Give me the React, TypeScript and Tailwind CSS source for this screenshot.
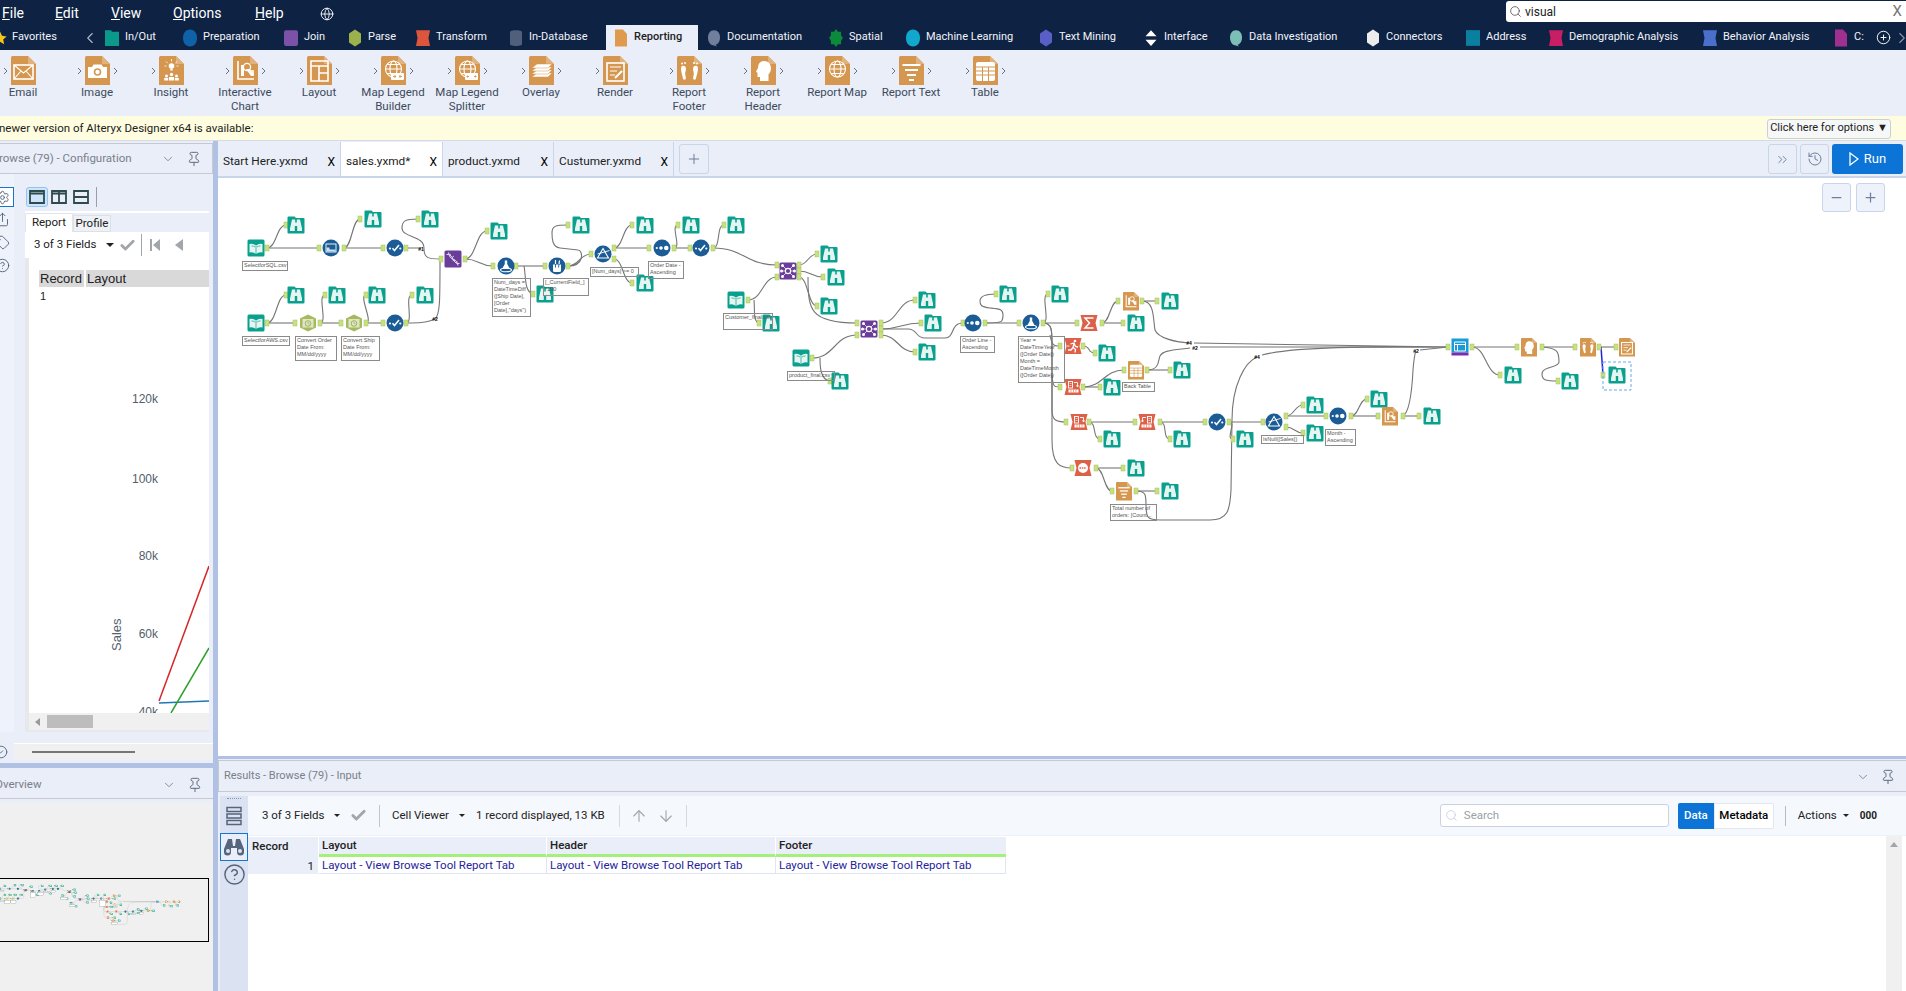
import type { ReactNode } from 'react';
import {
  ArrowDown,
  ArrowUp,
  Check,
  ChevronDown,
  ChevronLeft,
  ChevronRight,
  ChevronsRight,
  CircleCheck,
  CircleHelp,
  CirclePlus,
  Globe,
  History,
  Minus,
  Pin,
  Plus,
  Search,
  Settings,
  Share,
  Tag,
} from 'lucide-react';

const ORANGE = '#d5974f';

// white drawing that sits on the orange report tools, 25x29 units
const DocGlyph = ({ name }: { name: string }) => {
  const line = { fill: 'none', stroke: '#fff', strokeWidth: 1.6 };
  const globe = (
    <g {...line} strokeWidth={1.1}>
      <circle cx="12.5" cy="13" r="8" />
      <ellipse cx="12.5" cy="13" rx="3.5" ry="8" />
      <path d="M4.5 13h16M6 8.5h13M6 17.5h13" />
    </g>
  );
  switch (name) {
    case 'email':
      return (
        <g {...line}>
          <rect x="3" y="9" width="19" height="14" />
          <path d="M3 9l9.5 8 9.5-8M3 23l7-8M22 23l-7-8" strokeWidth={1.1} />
        </g>
      );
    case 'image':
      return (
        <g>
          <path d="M3 11h4l1.5-2.5h8L18 11h4v11H3z" fill="#fff" />
          <circle cx="12.5" cy="16" r="3.8" fill={ORANGE} />
          <circle cx="12.5" cy="16" r="2.2" fill="#fff" />
        </g>
      );
    case 'insight':
      return (
        <g fill="#fff">
          <circle cx="12.5" cy="10" r="2.8" />
          <rect x="11.3" y="12.5" width="2.4" height="2" />
          <path d="M12.5 3v2.5M7 5.5l1.6 1.6M18 5.5l-1.6 1.6M5.5 10h2M17.5 10h2" stroke="#fff" strokeWidth="0.8" />
          <circle cx="12.5" cy="18.5" r="1.7" />
          <circle cx="7.5" cy="20" r="1.5" />
          <circle cx="17.5" cy="20" r="1.5" />
          <rect x="10" y="21" width="5" height="3.5" />
          <rect x="5.2" y="22" width="4" height="2.5" />
          <rect x="15.8" y="22" width="4" height="2.5" />
        </g>
      );
    case 'chart':
      return (
        <g>
          <path d="M5 5v18h16" {...line} />
          <rect x="8" y="9" width="3" height="11" fill="#fff" />
          <circle cx="14" cy="11" r="3.6" {...line} strokeWidth={1.3} />
          <path d="M13 13l5 7 3-1-4-6z" fill="#fff" />
          <rect x="18" y="14" width="3" height="6" fill="#fff" opacity="0.8" />
        </g>
      );
    case 'layout':
      return <path d="M4 5h17v20H4zM4 10h17M12 10v15M12 17h9" {...line} />;
    case 'builder':
    case 'splitter':
      return (
        <g>
          {globe}
          <rect x="10" y="17" width="13" height="7" rx="1" fill="#fff" />
          <path d={name === 'builder' ? 'M12 20.5h3M21 20.5h-3M14 19v3M19 19v3' : 'M14 20.5h-2.5M19 20.5h2.5M12.5 19.5v2M20.5 19.5v2'} stroke={ORANGE} strokeWidth="0.9" />
        </g>
      );
    case 'overlay':
      return (
        <g fill="#fff" stroke={ORANGE} strokeWidth="0.5">
          <path d="M3 21l5-4h15l-4 4z" />
          <path d="M3 18l5-4h15l-4 4z" />
          <path d="M3 15l5-4h15l-4 4z" />
          <path d="M3 12l5-4h15l-4 4z" />
        </g>
      );
    case 'render':
      return (
        <g {...line}>
          <rect x="4" y="7" width="17" height="18" />
          <path d="M7 11h11M7 15h7M7 19h5" strokeWidth={1.2} />
          <path d="M12 22l7-7" strokeWidth={2} />
        </g>
      );
    case 'footer':
      return (
        <g fill="#fff">
          <path d="M5 10c2-1 4 0 4 3 0 2-1 3-.8 5 .2 2 .8 2.500.6 4.500-.2 1.600-2.300 1.600-2.800 0C5.500 20 4 15 4 13c0-1.500.2-2.500 1-3z" />
          <path d="M20 10c-2-1-4 0-4 3 0 2 1 3 .8 5-.2 2-.8 2.500-.6 4.500.2 1.600 2.300 1.600 2.800 0C19.500 20 21 15 21 13c0-1.500-.2-2.500-1-3z" />
          <circle cx="5" cy="7.500" r="1" />
          <circle cx="8" cy="7" r="1" />
          <circle cx="20" cy="7.500" r="1" />
          <circle cx="17" cy="7" r="1" />
        </g>
      );
    case 'header':
      return <path d="M13 5c4.500 0 7 3 7 7.500 0 3-1.500 4.500-2.500 6V25H9v-4H6.500v-4L5 15.500l2-3.500c0-4 2-7 6-7z" fill="#fff" />;
    case 'map':
      return globe;
    case 'text':
      return (
        <g fill="#fff">
          <rect x="3.500" y="8" width="18" height="2" />
          <rect x="6" y="13" width="13" height="2" />
          <rect x="8" y="18" width="9" height="2" />
          <rect x="10" y="23" width="5" height="2" />
        </g>
      );
    case 'table':
      return (
        <g>
          <rect x="3" y="6" width="19" height="19" rx="2" fill="#fff" />
          <path d="M3 11h19M3 15h19M3 19h19M9.500 11v14M15.500 11v14" stroke={ORANGE} strokeWidth="1" />
        </g>
      );
    default:
      return null;
  }
};

const DocBody = ({ name }: { name: string }) => (
  <>
    <path d="M1.500 0H17l8 8v21H0V1.500Q0 0 1.500 0z" fill={ORANGE} />
    <path d="M17 0l8 8h-8z" fill="#e3b27c" />
    <DocGlyph name={name} />
  </>
);

// tools on the canvas, all drawn in 17x17 units round their centre
const TEAL = '#0aa08d';
const BLUE = '#1b5c97';
const RED = '#dd6148';
const PURPLE = '#6a3d9a';

const redShape = 'M0 0.500H17L15 8.500L17 16.500H0L2 8.500Z';

const Tool = ({ kind, x, y }: { kind: string; x: number; y: number }) => {
  let body: ReactNode = null;
  const w = { fill: 'none', stroke: '#fff', strokeWidth: 1.1 };
  switch (kind) {
    case 'browse':
      body = (
        <>
          <path d="M1 0H7L8.500 1.500H16Q17 1.500 17 2.500V16Q17 17 16 17H1Q0 17 0 16V1Q0 0 1 0Z" fill={TEAL} />
          <path d="M4.500 3H7.700V6H9.300V3H12.500L14.500 12V14.500H9.700V9.500H7.300V14.500H2.500V12Z" fill="#e4f5f2" />
        </>
      );
      break;
    case 'input':
      body = (
        <>
          <rect width="17" height="17" rx="1.500" fill={TEAL} />
          <path d="M2 4.500Q5.500 3.500 8.500 6Q11.500 3.500 15 4.500V13Q11.500 12 8.500 14.500Q5.500 12 2 13Z" fill="#e4f5f2" />
          <path d="M8.500 6V14.500M4 6.500Q6 6.300 7.500 7.500M13 6.500Q11 6.300 9.500 7.500" stroke={TEAL} strokeWidth="0.7" fill="none" />
        </>
      );
      break;
    case 'select':
      body = (
        <>
          <circle cx="8.500" cy="8.500" r="8.500" fill={BLUE} />
          <rect x="3.500" y="4.500" width="10" height="8" fill="none" stroke="#fff" strokeWidth="0.9" />
          <path d="M4 12V8h3v2h6v2z" fill="#cfe0f0" />
        </>
      );
      break;
    case 'check':
      body = (
        <>
          <circle cx="8.500" cy="8.500" r="8.500" fill={BLUE} />
          <circle cx="3.500" cy="9" r="1.100" fill="#fff" />
          <circle cx="13.800" cy="9" r="1.100" fill="#fff" />
          <path d="M6 8.800L8 11L12.500 5.500" fill="none" stroke="#fff" strokeWidth="1.500" />
        </>
      );
      break;
    case 'sort':
      body = (
        <>
          <circle cx="8.500" cy="8.500" r="8.500" fill={BLUE} />
          <circle cx="3.300" cy="8.500" r="1.100" fill="#fff" />
          <circle cx="7.500" cy="8.500" r="1.800" fill="#fff" />
          <circle cx="12.800" cy="8.500" r="2.300" fill="#fff" />
        </>
      );
      break;
    case 'formula':
      body = (
        <>
          <circle cx="8.500" cy="8.500" r="8.500" fill={BLUE} />
          <path d="M7.300 3H9.700V6.500L12.500 11.500H4.500L7.300 6.500Z" fill="#fff" />
          <ellipse cx="8.500" cy="12.500" rx="5.500" ry="1.800" {...w} />
        </>
      );
      break;
    case 'multi':
      body = (
        <>
          <circle cx="8.500" cy="8.500" r="8.500" fill={BLUE} />
          <path d="M4.500 7H12.500V13Q12.500 14.500 11 14.500H6Q4.500 14.500 4.500 13Z" fill="#fff" />
          <path d="M7 10V2.500M10 10L11 3" stroke={BLUE} strokeWidth="0.9" />
          <path d="M7 6.500V2.500M10.500 6.500L11 3" stroke="#fff" strokeWidth="1.200" />
        </>
      );
      break;
    case 'filter':
      body = (
        <>
          <circle cx="8.500" cy="8.500" r="8.500" fill={BLUE} />
          <path d="M8.500 3L14 12.500H3Z" {...w} />
          <path d="M3 8.500L15 5" stroke="#fff" strokeWidth="0.9" />
        </>
      );
      break;
    case 'dna':
      body = (
        <>
          <rect width="17" height="17" rx="1.500" fill={PURPLE} />
          <path d="M2 4Q6 3 8.500 8.500T15 13M4 2Q5 8 9 9T13.500 15" fill="none" stroke="#ece6f4" strokeWidth="1" />
          <path d="M5 4.500L6.500 3.500M7.500 7L9.500 5.500M8 10.500L10.500 9M11 12.500L12.500 11" stroke="#ece6f4" strokeWidth="0.7" />
        </>
      );
      break;
    case 'join':
      body = (
        <>
          <rect width="17" height="17" rx="1.500" fill={PURPLE} />
          <circle cx="8.500" cy="8.500" r="2.600" {...w} />
          <path d="M3 3L6.500 6.500M14 3L10.500 6.500M3 14L6.500 10.500M14 14L10.500 10.500M1.500 8.500H5.900M15.500 8.500H11.100" stroke="#fff" strokeWidth="0.7" />
          {[
            [3, 3],
            [14, 3],
            [3, 14],
            [14, 14],
            [2, 8.5],
            [15, 8.5],
          ].map(([cx, cy]) => (
            <circle key={`${cx}-${cy}`} cx={cx} cy={cy} r="1.500" fill="#fff" />
          ))}
        </>
      );
      break;
    case 'date':
      body = (
        <>
          <path d="M8.500 0L16.500 4V13L8.500 17L0.500 13V4Z" fill="#a5ba5e" />
          <rect x="3" y="4.500" width="11" height="8.500" fill="#dfe7c2" />
          <circle cx="8.500" cy="9" r="2.800" fill="none" stroke="#8ea24c" strokeWidth="0.8" />
          <path d="M8.500 7.500V9L10 9.500" fill="none" stroke="#8ea24c" strokeWidth="0.6" />
        </>
      );
      break;
    case 'sum':
      body = (
        <>
          <path d={redShape} fill={RED} />
          <path d="M13 3.500H4.500L9 8.500L4.500 13.500H13" fill="none" stroke="#fff" strokeWidth="1.500" />
        </>
      );
      break;
    case 'run':
      body = (
        <>
          <path d={redShape} fill={RED} />
          <circle cx="10.500" cy="3.500" r="1.300" fill="#fff" />
          <path d="M6 6.500L9.500 5.500L11 9L13.500 9.500M9.500 6L8.500 10L11 12L10.500 15M8.500 10L6.500 12.500H3.500" fill="none" stroke="#fff" strokeWidth="1.300" />
          <path d="M2.500 8.500H5" stroke="#fff" strokeWidth="0.8" />
        </>
      );
      break;
    case 'cross':
    case 'transpose':
      body = (
        <>
          <path d={redShape} fill={RED} />
          <g transform={kind === 'transpose' ? 'translate(17 0) scale(-1 1)' : undefined}>
            <rect x="4" y="3" width="4" height="6.500" fill="none" stroke="#fff" strokeWidth="0.9" />
            <path d="M5 5H7M5 7H7" stroke="#fff" strokeWidth="0.6" />
            <path d="M9.500 4H13V8M12 7L13 8.500L14 7" fill="none" stroke="#fff" strokeWidth="0.9" />
            <rect x="4" y="11" width="10" height="3" fill="#fff" />
            <path d="M6.500 11V14M9 11V14M11.500 11V14" stroke={RED} strokeWidth="0.6" />
          </g>
        </>
      );
      break;
    case 'count':
      body = (
        <>
          <path d={redShape} fill={RED} />
          <circle cx="8.500" cy="8.500" r="5" fill="#fff" />
          <path d="M5 8.500H12" stroke={RED} strokeWidth="1.600" strokeDasharray="1.500 0.800" />
        </>
      );
      break;
    case 'layout':
      body = (
        <>
          <rect width="17" height="14" fill="#1a9ad6" />
          <rect y="14" width="17" height="3" fill="#7b2fb0" />
          <path d="M3 3.500H14V12.500H3ZM3 6H14M6 6V12.500" fill="none" stroke="#fff" strokeWidth="1" />
        </>
      );
      break;
    default:
      return (
        <g transform={`translate(${x - 8} ${y - 9}) scale(0.64)`}>
          <DocBody name={kind} />
        </g>
      );
  }
  return <g transform={`translate(${x - 8.5} ${y - 8.5})`}>{body}</g>;
};

const tools: [string, number, number][] = [
  ['input', 256, 248], ['browse', 296, 225], ['select', 331, 248], ['browse', 373, 219], ['check', 395, 248],
  ['browse', 430, 219], ['dna', 453, 259], ['browse', 499, 231], ['formula', 506, 266], ['browse', 545, 294],
  ['multi', 557, 266], ['browse', 581, 225], ['filter', 603, 254], ['browse', 645, 225], ['browse', 645, 283],
  ['sort', 662, 248], ['browse', 691, 225], ['check', 701, 248], ['browse', 736, 225],
  ['input', 256, 323], ['browse', 296, 295], ['date', 308, 323], ['browse', 337, 295], ['date', 354, 323],
  ['browse', 377, 295], ['check', 395, 323], ['browse', 425, 295],
  ['join', 788, 271], ['browse', 829, 254], ['browse', 836, 277], ['browse', 829, 306], ['input', 736, 300],
  ['browse', 771, 323], ['join', 869, 329], ['browse', 927, 300], ['browse', 933, 323], ['browse', 927, 352],
  ['input', 801, 358], ['browse', 840, 381], ['sort', 973, 323], ['browse', 1008, 294], ['formula', 1031, 323],
  ['browse', 1060, 294], ['sum', 1089, 323], ['chart', 1131, 301], ['browse', 1170, 301], ['browse', 1136, 323],
  ['run', 1073, 346], ['browse', 1107, 353], ['cross', 1073, 387], ['table', 1136, 370], ['browse', 1112, 387],
  ['browse', 1182, 370], ['cross', 1079, 422], ['browse', 1112, 439], ['transpose', 1147, 422], ['browse', 1182, 439],
  ['check', 1217, 422], ['browse', 1245, 439], ['filter', 1274, 422], ['browse', 1315, 405], ['browse', 1315, 433],
  ['sort', 1338, 416], ['browse', 1379, 399], ['chart', 1390, 416], ['browse', 1432, 416], ['count', 1083, 468],
  ['browse', 1136, 468], ['text', 1124, 491], ['browse', 1170, 491], ['layout', 1460, 347], ['browse', 1513, 375],
  ['header', 1529, 347], ['footer', 1588, 347], ['browse', 1570, 381], ['render', 1627, 347], ['browse', 1617, 375],
];

// connections that are a plain S curve between two anchors
const links: [number, number, number, number][] = [
  [267, 248, 286, 225], [267, 248, 319, 248], [344, 248, 360, 219], [344, 248, 383, 248],
  [267, 323, 286, 295], [267, 323, 295, 323], [320, 323, 325, 295], [320, 323, 341, 323],
  [366, 323, 366, 295], [366, 323, 383, 323], [406, 323, 412, 295], [465, 259, 487, 231],
  [465, 259, 493, 266], [516, 266, 545, 266], [568, 266, 591, 254], [614, 248, 632, 225],
  [614, 248, 649, 248], [614, 259, 632, 283], [674, 248, 678, 225], [674, 248, 690, 248],
  [713, 248, 724, 225], [713, 248, 777, 265], [748, 300, 777, 277], [799, 265, 817, 254],
  [799, 271, 823, 277], [799, 277, 817, 306], [812, 358, 857, 335], [881, 323, 915, 300],
  [881, 329, 921, 323], [881, 335, 915, 352], [985, 323, 1019, 323], [1043, 323, 1048, 294],
  [1043, 323, 1077, 323], [1102, 323, 1118, 301], [1102, 323, 1123, 323], [1142, 301, 1157, 301],
  [1083, 346, 1095, 353], [1083, 387, 1124, 370], [1083, 387, 1100, 387], [1147, 370, 1170, 370],
  [1089, 422, 1135, 422], [1089, 422, 1100, 439], [1160, 422, 1205, 422], [1160, 422, 1170, 439],
  [1229, 422, 1263, 422], [1229, 422, 1233, 439], [1286, 416, 1303, 405], [1286, 416, 1326, 416],
  [1286, 427, 1303, 433], [1351, 416, 1367, 399], [1351, 416, 1378, 416], [1403, 416, 1419, 416],
  [1096, 468, 1123, 468], [1096, 468, 1112, 491], [1136, 491, 1157, 491], [1472, 347, 1517, 347],
  [1472, 347, 1500, 375], [1542, 347, 1575, 347], [1599, 347, 1616, 347],
];

// the wires with a hand shaped route
const routes = [
  'M406 248H421M424 249C425 235 402 238 402 228C402 221 405 219 418 219',
  'M424 249C424 258 428 259 441 259',
  'M406 323C415 323 425 324 435 319C440 315 440 300 440 262',
  'M524 266C526 275 524 292 533 294',
  'M568 266C585 266 583 250 578 250L560 248C552 247 552 238 552 233C552 226 555 225 568 225',
  'M754 300C755 310 753 322 759 323',
  'M808 277C808 310 810 323 857 323',
  'M820 358C820 365 820 380 830 381',
  'M881 329H908C918 329 915 338 925 338H945C955 338 950 323 963 323',
  'M985 323C1003 323 1003 322 1003 315C1003 309 1000 309 990 308C980 307 980 304 980 301C980 296 985 294 996 294',
  'M1043 323C1052 323 1052 330 1052 345V410C1052 420 1056 422 1066 422',
  'M1043 323C1052 323 1052 330 1052 345V440C1052 465 1060 468 1072 468',
  'M1050 335C1052 346 1054 346 1060 346',
  'M1052 375C1053 387 1054 387 1060 387',
  'M1142 301C1155 301 1153 320 1155 330C1158 338 1175 342 1189 343',
  'M1147 370C1160 370 1158 360 1160 356C1163 350 1175 350 1190 348',
  'M1194 343L1448 347M1200 347H1448',
  'M1403 416C1410 412 1412 390 1413 370C1414 358 1415 353 1416 351',
  'M1420 350L1448 347',
  'M1136 491C1146 491 1146 495 1146 505C1146 518 1148 520 1160 520H1210C1228 520 1230 510 1231 490L1232 420C1232 385 1245 362 1257 357',
  'M1262 355C1300 345 1400 347 1448 347',
  'M1542 347C1558 348 1559 352 1559 362C1559 368 1542 366 1542 374C1542 380 1545 381 1558 381',
];

const extraPorts: [number, number][] = [
  [406, 248], [418, 219], [441, 259], [533, 294], [568, 225], [759, 323], [857, 323], [830, 381], [963, 323],
  [996, 294], [1066, 422], [1072, 468], [1060, 346], [1060, 387], [1558, 381], [1603, 375], [516, 266],
  [748, 300], [812, 358], [881, 323], [881, 329], [881, 335], [799, 265], [799, 271], [799, 277],
  [777, 265], [777, 277], [857, 335], [1472, 347], [1542, 347], [1599, 347], [1286, 416], [1286, 427],
  [1403, 416], [1142, 301], [1147, 370], [1160, 422], [1229, 422], [1136, 491], [1096, 468], [985, 323],
  [1043, 323], [1089, 422], [1083, 387], [1083, 346], [1102, 323], [713, 248], [690, 248], [674, 248],
  [1448, 347],
];

const wireTags: [number, number, string][] = [
  [421, 249, '#1'], [435, 319, '#2'], [1189, 343, '#4'], [1195, 348, '#2'], [1257, 357, '#4'], [1416, 351, '#2'],
];

const curve = ([x1, y1, x2, y2]: [number, number, number, number]) => {
  const dx = Math.max(8, Math.abs(x2 - x1) / 2);
  return `M${x1} ${y1}C${x1 + dx} ${y1} ${x2 - dx} ${y2} ${x2} ${y2}`;
};

const allPorts = () => {
  const seen = new Set<string>();
  const ports: [number, number][] = [];
  const add = (x: number, y: number) => {
    const key = `${x},${y}`;
    if (!seen.has(key)) {
      seen.add(key);
      ports.push([x, y]);
    }
  };
  links.forEach(([a, b, c, d]) => {
    add(a, b);
    add(c, d);
  });
  extraPorts.forEach(([a, b]) => add(a, b));
  return ports;
};

const notes: { x: number; y: number; w: number; h: number; text: string }[] = [
  { x: 242, y: 261, w: 46, h: 10, text: 'SelectforSQL.csv' },
  { x: 242, y: 336, w: 48, h: 10, text: 'SelectforAWS.csv' },
  { x: 295, y: 336, w: 42, h: 25, text: 'Convert Order Date From: MM/dd/yyyy' },
  { x: 341, y: 336, w: 39, h: 25, text: 'Convert Ship Date From: MM/dd/yyyy' },
  { x: 492, y: 278, w: 39, h: 39, text: 'Num_days = DateTimeDiff ([Ship Date], [Order Date],"days")' },
  { x: 543, y: 278, w: 46, h: 18, text: '[_CurrentField_] *100' },
  { x: 590, y: 267, w: 49, h: 10, text: '[Num_days] >= 0' },
  { x: 648, y: 261, w: 36, h: 18, text: 'Order Date - Ascending' },
  { x: 723, y: 313, w: 50, h: 17, text: 'Customer_final.csv' },
  { x: 787, y: 371, w: 48, h: 10, text: 'product_final.csv' },
  { x: 960, y: 336, w: 35, h: 17, text: 'Order Line - Ascending' },
  { x: 1018, y: 336, w: 47, h: 47, text: 'Year = DateTimeYear ([Order Date]) Month = DateTimeMonth ([Order Date])' },
  { x: 1122, y: 382, w: 33, h: 10, text: 'Back Table' },
  { x: 1261, y: 435, w: 43, h: 9, text: 'IsNull([Sales])' },
  { x: 1325, y: 429, w: 31, h: 17, text: 'Month - Ascending' },
  { x: 1110, y: 504, w: 47, h: 17, text: 'Total number of orders: [Count...' },
];

// wires, anchors and tool icons; the overview pane shows the same drawing, scaled down
const Flow = ({ mini }: { mini?: boolean }) => (
  <>
    <g fill="none" stroke="#757575" strokeWidth="1.100">
      {links.map((l) => (
        <path key={l.join()} d={curve(l)} />
      ))}
      {routes.map((d) => (
        <path key={d} d={d} />
      ))}
    </g>
    <path d="M1601 347L1603 375" stroke="#2222dd" strokeWidth="1.500" />
    {allPorts().map(([x, y]) => (
      <rect key={`${x}-${y}`} x={x - 2} y={y - 3} width="4" height="6" fill="#c6e27c" stroke="#a9bf66" strokeWidth="0.5" />
    ))}
    {tools.map(([kind, x, y]) => (
      <Tool key={`${kind}-${x}-${y}`} kind={kind} x={x} y={y} />
    ))}
    {mini ? (
      notes.map((n) => <rect key={n.text} x={n.x} y={n.y} width={n.w} height={n.h} fill="#fff" stroke="#777" strokeWidth="2" />)
    ) : (
      <>
        <rect x="1603" y="362" width="28" height="28" fill="none" stroke="#62aaf0" strokeWidth="1" strokeDasharray="3 2" />
        {wireTags.map(([x, y, t]) => (
          <text key={`${x}-${t}`} x={x} y={y + 2} fontSize="5" fontFamily="Liberation Sans, sans-serif" fontWeight="700" fill="#000" textAnchor="middle">
            {t}
          </text>
        ))}
      </>
    )}
  </>
);

const ribbon: { name: string; glyph: string; out: boolean }[] = [
  { name: 'Email', glyph: 'email', out: false },
  { name: 'Image', glyph: 'image', out: true },
  { name: 'Insight', glyph: 'insight', out: false },
  { name: 'Interactive Chart', glyph: 'chart', out: true },
  { name: 'Layout', glyph: 'layout', out: true },
  { name: 'Map Legend Builder', glyph: 'builder', out: true },
  { name: 'Map Legend Splitter', glyph: 'splitter', out: true },
  { name: 'Overlay', glyph: 'overlay', out: true },
  { name: 'Render', glyph: 'render', out: false },
  { name: 'Report Footer', glyph: 'footer', out: true },
  { name: 'Report Header', glyph: 'header', out: true },
  { name: 'Report Map', glyph: 'map', out: true },
  { name: 'Report Text', glyph: 'text', out: true },
  { name: 'Table', glyph: 'table', out: true },
];

const TabShape = ({ shape, color }: { shape: string; color: string }) => (
  <svg viewBox="0 0 16 16" preserveAspectRatio="none" className="h-[18px] w-[16px] shrink-0">
    <path d={shape} fill={color} />
  </svg>
);

const shapes = {
  folder: 'M1 1H7L8 2.500H15V15H1Z',
  oval: 'M8 0.500C12.500 0.500 15 4 15 8S12.500 15.500 8 15.500S1 12 1 8S3.500 0.500 8 0.500Z',
  square: 'M3 1H13Q15 1 15 3V13Q15 15 13 15H3Q1 15 1 13V3Q1 1 3 1Z',
  hex: 'M8 0.500L14 4V12L8 15.500L2 12V4Z',
  banner: 'M1 1H15L13.500 8L15 15H1L2.500 8Z',
  doc: 'M2 0.500H10L14 4.500V15.500H2Z',
  bubble: 'M8 1C12 1 14 4 14 7.500S12 13.500 9.500 14L11 15.500L7 14.500C4 14 2 11 2 7.500S4 1 8 1Z',
  star: 'M8 0L10 2.500H13L13 5.500L15 8L13 10.500V13.500H10L8 16L6 13.500H3V10.500L1 8L3 5.500V2.500H6Z',
  updown: 'M8 1L13.500 6.500H2.500ZM8 15L2.500 9.500H13.500Z',
  stamp: 'M1 1H15V15H1Z',
  db: 'M2 2.500C2 0.500 14 0.500 14 2.500V13.500C14 15.500 2 15.500 2 13.500Z',
};

const categories: { label: string; shape: string; color: string; w: string }[] = [
  { label: 'In/Out', shape: shapes.folder, color: '#0b9a89', w: 'w-[78px]' },
  { label: 'Preparation', shape: shapes.oval, color: '#0f62a8', w: 'w-[101px]' },
  { label: 'Join', shape: shapes.square, color: '#7b52a8', w: 'w-[64px]' },
  { label: 'Parse', shape: shapes.hex, color: '#9bb24c', w: 'w-[68px]' },
  { label: 'Transform', shape: shapes.banner, color: '#dc553c', w: 'w-[93px]' },
  { label: 'In-Database', shape: shapes.db, color: '#4f5f7c', w: 'w-[98px]' },
];

const categoriesAfter: { label: string; shape: string; color: string; w: string }[] = [
  { label: 'Documentation', shape: shapes.bubble, color: '#6f7f9c', w: 'w-[122px]' },
  { label: 'Spatial', shape: shapes.star, color: '#0a8a3a', w: 'w-[77px]' },
  { label: 'Machine Learning', shape: shapes.oval, color: '#10a8cc', w: 'w-[133px]' },
  { label: 'Text Mining', shape: shapes.hex, color: '#5a5fc8', w: 'w-[105px]' },
  { label: 'Interface', shape: shapes.updown, color: '#ffffff', w: 'w-[85px]' },
  { label: 'Data Investigation', shape: shapes.bubble, color: '#7dbfb6', w: 'w-[137px]' },
  { label: 'Connectors', shape: shapes.hex, color: '#ececec', w: 'w-[100px]' },
  { label: 'Address', shape: shapes.stamp, color: '#0a7fa0', w: 'w-[83px]' },
  { label: 'Demographic Analysis', shape: shapes.banner, color: '#c81e63', w: 'w-[154px]' },
  { label: 'Behavior Analysis', shape: shapes.banner, color: '#4a70cc', w: 'w-[131px]' },
];

const Category = ({ label, shape, color, w }: { label: string; shape: string; color: string; w: string }) => (
  <div className={`flex shrink-0 items-center gap-[5px] ${w}`}>
    <TabShape shape={shape} color={color} />
    <span className="whitespace-nowrap">{label}</span>
  </div>
);

const docTabs = [
  { name: 'Start Here.yxmd', w: 'w-[123px]', active: false },
  { name: 'sales.yxmd*', w: 'w-[102px]', active: true },
  { name: 'product.yxmd', w: 'w-[111px]', active: false },
  { name: 'Custumer.yxmd', w: 'w-[120px]', active: false },
];

const menus = [
  { letter: 'F', rest: 'ile', w: 'w-[53px]' },
  { letter: 'E', rest: 'dit', w: 'w-[56px]' },
  { letter: 'V', rest: 'iew', w: 'w-[62px]' },
  { letter: 'O', rest: 'ptions', w: 'w-[82px]' },
  { letter: 'H', rest: 'elp', w: 'w-[65px]' },
];

const LayoutChoice = ({ d, on }: { d: string; on?: boolean }) => (
  <div className={on ? 'rounded-[3px] border border-[#90c4f5] bg-[#cde4fb] p-[2px]' : 'p-[3px]'}>
    <svg viewBox="0 0 16 14" className="h-[14px] w-[16px]">
      <path d={d} fill="none" stroke="#2f4a4a" strokeWidth="1.800" />
    </svg>
  </div>
);

const TableCell = ({ children }: { children: ReactNode }) => (
  <div className="flex h-[17px] items-center overflow-hidden whitespace-nowrap border-r border-b border-[#dfe6f3] pt-[2px] pl-[3px] text-[#24249c]">
    {children}
  </div>
);

const App = () => {
  return (
    <div className="flex h-[991px] w-[1906px] flex-col overflow-hidden bg-[#e9eef8] font-[Roboto,sans-serif] text-[11.5px] text-[#222]">
      {/* title area */}
      <div className="h-[50px] shrink-0 bg-[#0e2344] text-white">
        <div className="flex h-[25px] items-start pl-[2px]">
          <div className="flex items-center pt-[3px] text-[14px]">
            {menus.map((m) => (
              <div key={m.letter} className={m.w}>
                <span className="underline">{m.letter}</span>
                {m.rest}
              </div>
            ))}
            <Globe className="h-[14px] w-[14px]" strokeWidth={1.5} />
          </div>
          <div className="mt-[1px] ml-auto flex h-[21px] w-[400px] items-center rounded-l-[3px] bg-white pl-[3px] text-[12px] text-[#222]">
            <Search className="h-[13px] w-[13px] text-[#555]" strokeWidth={1.5} />
            <span className="ml-[3px]">visual</span>
            <span className="mr-[4px] ml-auto text-[15px] text-[#777]">X</span>
          </div>
        </div>
        <div className="flex h-[25px] items-center overflow-hidden text-[11px] text-[#f2f4f8]">
          <div className="-ml-[7px] flex w-[88px] shrink-0 items-center gap-[5px]">
            <svg viewBox="0 0 16 16" className="h-[14px] w-[14px] shrink-0">
              <path d="M8 0.500L10.300 5.500L15.500 6.200L11.700 9.800L12.700 15L8 12.400L3.300 15L4.300 9.800L0.500 6.200L5.700 5.500Z" fill="#f5c518" />
            </svg>
            Favorites
          </div>
          <ChevronLeft className="h-[18px] w-[18px] shrink-0 text-[#aeb9cc]" strokeWidth={1.5} />
          <div className="w-[5px] shrink-0" />
          {categories.map((c) => (
            <Category key={c.label} {...c} />
          ))}
          <div className="mr-[8px] flex h-[25px] w-[92px] shrink-0 items-center gap-[5px] bg-[#e9eef8] pl-[7px] font-medium text-[#222]">
            <TabShape shape={shapes.doc} color="#e09a4d" />
            Reporting
          </div>
          {categoriesAfter.map((c) => (
            <Category key={c.label} {...c} />
          ))}
          <div className="flex w-[43px] shrink-0 items-center gap-[5px] overflow-hidden">
            <TabShape shape={shapes.doc} color="#a03090" />
            <span>C:</span>
          </div>
          <CirclePlus className="h-[15px] w-[15px] shrink-0 text-white" strokeWidth={1.5} />
          <ChevronRight className="ml-[2px] h-[18px] w-[18px] shrink-0 text-[#8794ab]" strokeWidth={1.5} />
        </div>
      </div>

      {/* tool palette */}
      <div className="flex h-[66px] shrink-0 -ml-[14px] pt-[6px]">
        {ribbon.map((r) => (
          <div key={r.name} className="flex w-[74px] shrink-0 flex-col items-center">
            <div className="flex items-center gap-[3px] text-[#6a7280]">
              <svg viewBox="0 0 5 8" className="h-[8px] w-[5px]">
                <path d="M1 1L4 4L1 7" fill="none" stroke="currentColor" />
              </svg>
              <svg viewBox="0 0 25 29" className="h-[29px] w-[25px]">
                <DocBody name={r.glyph} />
              </svg>
              <svg viewBox="0 0 5 8" className={r.out ? 'h-[8px] w-[5px]' : 'invisible h-[8px] w-[5px]'}>
                <path d="M1 1L4 4L1 7" fill="none" stroke="currentColor" />
              </svg>
            </div>
            <div className="w-[70px] text-center leading-[14px] text-[#3c4a5c]">{r.name}</div>
          </div>
        ))}
      </div>

      {/* update notice */}
      <div className="flex h-[25px] shrink-0 items-center justify-between border-b border-[#d4dae6] bg-[#fffddf] pr-[15px]">
        <span className="-ml-[1px] whitespace-nowrap pt-[1px]">newer version of Alteryx Designer x64 is available:</span>
        <div className="mt-[1px] flex h-[20px] w-[124px] items-center justify-center whitespace-nowrap rounded-[3px] border border-[#c9cfd8] bg-[#f6f7f7] text-[11px]">
          Click here for options ▼
        </div>
      </div>

      <div className="flex min-h-0 flex-1">
        {/* left panes */}
        <div className="flex w-[213px] shrink-0 flex-col">
          <div className="flex h-[622px] shrink-0 flex-col">
            <div className="mt-[2px] flex h-[31px] shrink-0 items-center border border-l-0 border-[#c6c9d0] pr-[10px] text-[#7a8088]">
              <span className="-ml-[1px] whitespace-nowrap">rowse (79) - Configuration</span>
              <ChevronDown className="ml-auto h-[14px] w-[14px]" strokeWidth={1.5} />
              <Pin className="ml-[11px] h-[16px] w-[16px] text-[#5f6b7e]" strokeWidth={1.5} />
            </div>
            <div className="flex min-h-0 flex-1">
              <div className="flex w-[14px] shrink-0 flex-col items-start gap-[7px] overflow-hidden bg-[#eef2fa] pt-[13px] text-[#56647c]">
                <div className="-mb-[2px] flex h-[20px] w-[14px] shrink-0 items-center justify-end overflow-hidden border border-l-0 border-[#1575d3] bg-white pr-[3px]">
                  <Settings className="h-[15px] w-[15px] shrink-0" strokeWidth={1.5} />
                </div>
                <Share className="h-[15px] w-[15px] shrink-0 -ml-[5px]" strokeWidth={1.5} />
                <Tag className="mt-[1px] h-[15px] w-[15px] shrink-0 -ml-[5px]" strokeWidth={1.5} />
                <CircleHelp className="mt-[1px] h-[15px] w-[15px] shrink-0 -ml-[5px]" strokeWidth={1.5} />
              </div>
              <div className="ml-[11px] flex w-[184px] shrink-0 flex-col">
                <div className="mt-[13px] flex h-[26px] shrink-0 items-start border-b-2 border-white pl-[1px]">
                  <LayoutChoice on d="M1 1H15V13H1ZM1 3.500H15" />
                  <LayoutChoice d="M1 1H15V13H1ZM8 1V13M1 3.500H15" />
                  <LayoutChoice d="M1 1H15V13H1ZM1 7H15" />
                  <div className="ml-[4px] h-[20px] w-px bg-[#9a9ea6]" />
                </div>
                <div className="flex h-[19px] shrink-0 items-end">
                  <div className="flex h-[19px] w-[48px] items-center justify-center border border-b-0 border-[#e3e5ea] bg-white">Report</div>
                  <div className="flex h-[17px] w-[38px] items-center justify-center border border-[#dde0e6] bg-[#eef1f6]">Profile</div>
                </div>
                <div className="flex h-[26px] shrink-0 items-center bg-white pl-[9px]">
                  <span>3 of 3 Fields</span>
                  <svg viewBox="0 0 8 4" className="ml-[9px] h-[4px] w-[8px]">
                    <path d="M0 0H8L4 4Z" fill="#222" />
                  </svg>
                  <Check className="ml-[5px] h-[17px] w-[17px] text-[#a2a6ab]" strokeWidth={4} />
                  <div className="ml-[5px] h-[22px] w-px bg-[#a2a6ab]" />
                  <svg viewBox="0 0 12 12" className="ml-[7px] h-[12px] w-[12px]">
                    <path d="M1 0H3V12H1ZM11 0V12L4 6Z" fill="#a2a6ab" />
                  </svg>
                  <svg viewBox="0 0 8 12" className="ml-[14px] h-[12px] w-[8px]">
                    <path d="M8 0V12L0 6Z" fill="#a2a6ab" />
                  </svg>
                </div>
                <div className="flex min-h-0 flex-1 flex-col border-b-2 border-l-4 border-[#e6e8ec] bg-white">
                  <div className="flex flex-col pt-[12px] pl-[10px] font-['Liberation_Sans',sans-serif] text-[13px] leading-[17px]">
                    <div className="flex gap-[2px]">
                      <div className="w-[45px] bg-[#d9d9d9] pl-[1px]">Record</div>
                      <div className="flex-1 bg-[#d9d9d9] pl-[1px]">Layout</div>
                    </div>
                    <div className="pl-[1px] text-[11px] leading-[18px]">1</div>
                  </div>
                  <svg viewBox="29 305 180 408" className="h-[408px] w-[180px] shrink-0 overflow-hidden">
                    <g fontFamily="Liberation Sans, sans-serif" fontSize="12" fill="#54606c" textAnchor="end">
                      <text x="158" y="403">120k</text>
                      <text x="158" y="483">100k</text>
                      <text x="158" y="560">80k</text>
                      <text x="158" y="638">60k</text>
                      <text x="158" y="716">40k</text>
                    </g>
                    <text x="0" y="0" transform="translate(121 651) rotate(-90)" fontFamily="Liberation Sans, sans-serif" fontSize="13" fill="#54606c">
                      Sales
                    </text>
                    <path d="M159 701L209 566" stroke="#d62728" strokeWidth="1.500" fill="none" />
                    <path d="M159 703L209 701" stroke="#1f77b4" strokeWidth="1.500" fill="none" />
                    <path d="M171 713L209 648" stroke="#2ca02c" strokeWidth="1.500" fill="none" />
                  </svg>
                  <div className="flex h-[17px] shrink-0 items-center bg-[#f0f0f0] pl-[6px]">
                    <svg viewBox="0 0 5 8" className="h-[8px] w-[5px]">
                      <path d="M5 0V8L0 4Z" fill="#9a9a9a" />
                    </svg>
                    <div className="ml-[7px] h-[13px] w-[46px] bg-[#bdbdbd]" />
                  </div>
                </div>
              </div>
            </div>
            <div className="flex h-[31px] shrink-0 items-end pb-[3px]">
              <div className="-ml-[6px] flex h-[17px] w-[14px] items-center justify-center">
                <CircleCheck className="h-[14px] w-[14px] text-[#56647c]" strokeWidth={1.5} />
              </div>
              <div className="ml-[6px] flex h-[17px] flex-1 items-center border-t border-white bg-[#f0f0f0] pl-[18px]">
                <div className="h-[2px] w-[103px] bg-[#777]" />
              </div>
            </div>
          </div>
          <div className="h-[5px] shrink-0 bg-[#b0c1e3]" />
          <div className="flex h-[31px] shrink-0 items-center border-b border-[#c6c9d0] pt-[3px] pr-[10px] pl-0 text-[#7a8088]">
            <span className="-ml-[5px] whitespace-nowrap">Overview</span>
            <ChevronDown className="ml-auto h-[14px] w-[14px]" strokeWidth={1.5} />
            <Pin className="ml-[11px] h-[16px] w-[16px] text-[#5f6b7e]" strokeWidth={1.5} />
          </div>
          <div className="mt-[4px] flex-1 bg-[#f0f0f0] pt-[75px]">
            <div className="h-[64px] w-[209px] border border-l-0 border-black">
              <svg viewBox="279 173 1548 474" className="h-full w-full">
                <Flow mini />
              </svg>
            </div>
          </div>
        </div>

        <div className="w-[5px] shrink-0 bg-[#b0c1e3]" />

        {/* workflow and results */}
        <div className="flex min-w-0 flex-1 flex-col">
          <div className="flex h-[37px] shrink-0 items-center border-b-2 border-[#c9d5ea] pt-[1px] pr-[3px]">
            {docTabs.map((t) => (
              <div
                key={t.name}
                className={`flex h-[34px] shrink-0 items-center justify-between border-r border-[#c9d5ea] pt-[5px] pr-[5px] pl-[5px] ${t.w} ${t.active ? 'bg-white' : ''} text-[11.8px]`}
              >
                <span>{t.name}</span>
                <span className="text-[12px] text-black">X</span>
              </div>
            ))}
            <div className="ml-[5px] flex h-[30px] w-[30px] items-center justify-center rounded-[3px] border border-[#c9d5ea]">
              <Plus className="h-[16px] w-[16px] text-[#6f7f9c]" strokeWidth={1.5} />
            </div>
            <div className="ml-auto flex items-center gap-[3px]">
              <div className="flex h-[30px] w-[29px] items-center justify-center rounded-[3px] border border-[#c9d5ea]">
                <ChevronsRight className="h-[15px] w-[15px] text-[#6f7f9c]" strokeWidth={1.5} />
              </div>
              <div className="flex h-[30px] w-[29px] items-center justify-center rounded-[3px] border border-[#c9d5ea]">
                <History className="h-[16px] w-[16px] text-[#6f7f9c]" strokeWidth={1.5} />
              </div>
              <div className="flex h-[30px] w-[71px] items-center justify-center gap-[5px] rounded-[3px] bg-[#0c74d6] text-[13px] text-white">
                <svg viewBox="0 0 10 14" className="h-[14px] w-[10px]">
                  <path d="M1 1L9 7L1 13Z" fill="none" stroke="#fff" strokeWidth="1.300" />
                </svg>
                Run
              </div>
            </div>
          </div>

          <div className="relative h-[578px] shrink-0 overflow-hidden bg-white">
            <svg viewBox="218 178 1688 578" className="absolute inset-0 h-full w-full">
              <Flow />
            </svg>
            {notes.map((n) => (
              <div
                key={n.text}
                className="absolute overflow-hidden border border-[#8a8a8a] pl-[1px] font-['Liberation_Sans',sans-serif] text-[5.500px] leading-[7px] text-[#555]"
                style={{ left: n.x - 218, top: n.y - 178, width: n.w, height: n.h }}
              >
                {n.text}
              </div>
            ))}
            <div className="absolute top-[5px] right-[21px] flex gap-[5px]">
              <div className="flex h-[29px] w-[29px] items-center justify-center rounded-[3px] border border-[#c9d5ea] bg-[#eef2fa]">
                <Minus className="h-[15px] w-[15px] text-[#6f7f9c]" strokeWidth={2} />
              </div>
              <div className="flex h-[29px] w-[29px] items-center justify-center rounded-[3px] border border-[#c9d5ea] bg-[#eef2fa]">
                <Plus className="h-[15px] w-[15px] text-[#6f7f9c]" strokeWidth={2} />
              </div>
            </div>
          </div>

          <div className="h-[3px] shrink-0 bg-[#b0c1e3]" />
          <div className="mt-[1px] flex h-[32px] shrink-0 items-center border border-r-0 border-[#c6c9d0] pt-[1px] pr-[10px] pl-[5px] text-[#7a8088]">
            <span className="text-[11px]">Results - Browse (79) - Input</span>
            <ChevronDown className="ml-auto h-[14px] w-[14px]" strokeWidth={1.5} />
            <Pin className="ml-[10px] h-[16px] w-[16px] text-[#5f6b7e]" strokeWidth={1.5} />
          </div>

          <div className="mt-[4px] flex min-h-0 flex-1">
            <div className="ml-[2px] flex w-[28px] shrink-0 flex-col items-center bg-[#dbe3f2] text-[#56647c]">
              <div className="mt-[2px] h-[2px] w-[14px] border-t border-dotted border-[#8a94a8]" />
              <svg viewBox="0 0 16 20" className="mt-[6px] h-[20px] w-[16px]">
                <path d="M1 1.500H15V5.500H1ZM1 8H15V12H1ZM1 14.500H15V18.500H1Z" fill="none" stroke="#56647c" strokeWidth="1.500" />
              </svg>
              <div className="mt-[7px] flex h-[28px] w-[28px] shrink-0 items-center justify-center border border-[#1575d3] bg-[#e9eef8]">
                <svg viewBox="0 0 22 18" className="h-[18px] w-[22px]">
                  <path d="M5 1H9L10 8H12L13 1H17L21 11V14A3.500 3.500 0 0 1 14 14V10H8V14A3.500 3.500 0 0 1 1 14V11Z" fill="#56647c" />
                  <circle cx="5" cy="13" r="2" fill="#dbe3f2" />
                  <circle cx="17" cy="13" r="2" fill="#dbe3f2" />
                </svg>
              </div>
              <CircleHelp className="mt-[2px] h-[23px] w-[23px]" strokeWidth={1.500} />
            </div>
            <div className="flex min-w-0 flex-1 flex-col">
              <div className="flex h-[40px] shrink-0 items-center border-b border-[#eef1f6] bg-[#f5f8fd] pr-[4px] pl-[14px]">
                <span className="w-[62px] whitespace-nowrap">3 of 3 Fields</span>
                <svg viewBox="0 0 6 3" className="ml-[10px] h-[3px] w-[6px]">
                  <path d="M0 0H6L3 3Z" fill="#222" />
                </svg>
                <Check className="ml-[10px] h-[17px] w-[17px] text-[#a2a6ab]" strokeWidth={4} />
                <div className="ml-[12px] h-[22px] w-px bg-[#c3c7cd]" />
                <span className="ml-[12px] w-[59px] whitespace-nowrap">Cell Viewer</span>
                <svg viewBox="0 0 6 3" className="ml-[8px] h-[3px] w-[6px]">
                  <path d="M0 0H6L3 3Z" fill="#222" />
                </svg>
                <span className="ml-[11px] w-[131px] whitespace-nowrap">1 record displayed, 13 KB</span>
                <div className="ml-[12px] h-[22px] w-px bg-[#d6d9de]" />
                <ArrowUp className="ml-[10px] h-[18px] w-[18px] text-[#a2a6ab]" strokeWidth={1.5} />
                <ArrowDown className="ml-[9px] h-[18px] w-[18px] text-[#a2a6ab]" strokeWidth={1.5} />
                <div className="ml-[11px] h-[22px] w-px bg-[#d6d9de]" />
                <div className="ml-auto flex h-[23px] w-[229px] items-center gap-[6px] rounded-[3px] border border-[#c9d2e4] bg-white pl-[4px] text-[#9a9fa8]">
                  <Search className="h-[13px] w-[13px] text-[#c3d0e4]" strokeWidth={1.5} />
                  Search
                </div>
                <div className="ml-[9px] flex h-[26px] w-[36px] items-center justify-center rounded-l-[2px] bg-[#0c74d6] font-medium text-white">Data</div>
                <div className="flex h-[26px] w-[60px] items-center justify-center rounded-r-[2px] border border-[#e3e7ef] bg-white font-medium text-black">Metadata</div>
                <div className="ml-[11px] h-[20px] w-px bg-[#b8bcc3]" />
                <span className="ml-[12px]">Actions</span>
                <svg viewBox="0 0 6 3" className="ml-[6px] h-[3px] w-[6px]">
                  <path d="M0 0H6L3 3Z" fill="#222" />
                </svg>
                <span className="ml-[11px] mr-[25px] text-[10px] font-bold">000</span>
              </div>
              <div className="flex min-h-0 flex-1">
                <div className="min-w-0 flex-1 bg-white pt-px">
                  <div className="grid w-[758px] grid-cols-[71px_228px_229px_230px]">
                    <div className="flex h-[20px] items-center border-r border-white bg-[#e9eef8] pt-[1px] pb-[2px] pl-[4px] font-medium">Record</div>
                    <div className="flex h-[20px] items-center border-r border-white border-b-[3px] border-b-[#a3f07a] bg-[#e9eef8] pt-[1px] pl-[3px] font-medium">Layout</div>
                    <div className="flex h-[20px] items-center border-r border-white border-b-[3px] border-b-[#a3f07a] bg-[#e9eef8] pt-[1px] pl-[3px] font-medium">Header</div>
                    <div className="flex h-[20px] items-center border-white border-b-[3px] border-b-[#a3f07a] bg-[#e9eef8] pt-[1px] pl-[3px] font-medium">Footer</div>
                    <div className="flex h-[17px] items-center justify-end border-r border-white bg-[#e9eef8] pt-[2px] pr-[4px]">1</div>
                    <TableCell>Layout - View Browse Tool Report Tab</TableCell>
                    <TableCell>Layout - View Browse Tool Report Tab</TableCell>
                    <TableCell>Layout - View Browse Tool Report Tab</TableCell>
                  </div>
                </div>
                <div className="flex w-[16px] shrink-0 justify-center bg-[#f0f0f0] pt-[6px]">
                  <svg viewBox="0 0 8 5" className="h-[5px] w-[8px]">
                    <path d="M4 0L8 5H0Z" fill="#a2a6ab" />
                  </svg>
                </div>
                <div className="w-[4px] shrink-0 bg-white" />
              </div>
            </div>
          </div>
        </div>
      </div>
    </div>
  );
};

export default App;
